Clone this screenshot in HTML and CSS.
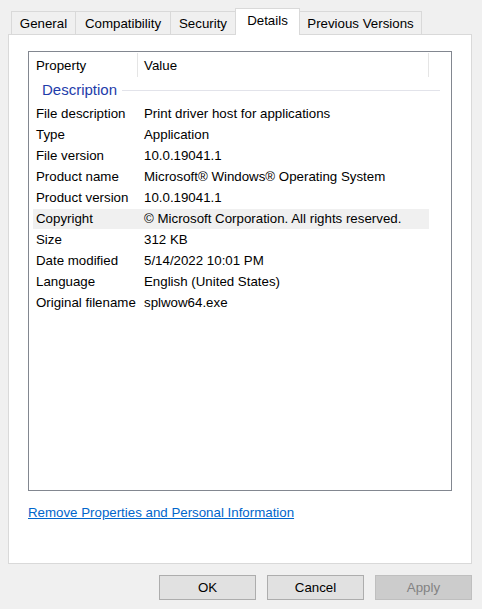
FILE: index.html
```html
<!DOCTYPE html>
<html>
<head>
<meta charset="utf-8">
<link rel="stylesheet" href="styles.css">
</head>
<body>
<div class="dialog">
  <div class="tabs">
    <div class="tab t-general">General</div>
    <div class="tab t-compat">Compatibility</div>
    <div class="tab t-security">Security</div>
    <div class="tab t-details selected">Details</div>
    <div class="tab t-prev">Previous Versions</div>
  </div>
  <div class="panel">
    <div class="listview">
      <div class="lv-header">
        <div class="hcol hprop">Property</div>
        <div class="hcol hval">Value</div>
        <div class="hcol hrest"></div>
      </div>
      <div class="group">
        <span class="group-title">Description</span>
        <span class="group-line"></span>
      </div>
      <div class="rows">
        <div class="row"><span class="k">File description</span><span class="v">Print driver host for applications</span></div>
        <div class="row"><span class="k">Type</span><span class="v">Application</span></div>
        <div class="row"><span class="k">File version</span><span class="v">10.0.19041.1</span></div>
        <div class="row"><span class="k">Product name</span><span class="v">Microsoft® Windows® Operating System</span></div>
        <div class="row"><span class="k">Product version</span><span class="v">10.0.19041.1</span></div>
        <div class="row hot"><span class="k">Copyright</span><span class="v">© Microsoft Corporation. All rights reserved.</span></div>
        <div class="row"><span class="k">Size</span><span class="v">312 KB</span></div>
        <div class="row"><span class="k">Date modified</span><span class="v">5/14/2022 10:01 PM</span></div>
        <div class="row"><span class="k">Language</span><span class="v">English (United States)</span></div>
        <div class="row"><span class="k">Original filename</span><span class="v">splwow64.exe</span></div>
      </div>
    </div>
    <a class="link" href="#">Remove Properties and Personal Information</a>
  </div>
  <div class="buttons">
    <button class="btn">OK</button>
    <button class="btn">Cancel</button>
    <button class="btn disabled">Apply</button>
  </div>
</div>
</body>
</html>
```
FILE: styles.css
```css
html, body {
  margin: 0;
  padding: 0;
  background: #f0f0f0;
}
body {
  font-family: "Liberation Sans", Arial, sans-serif;
  font-size: 13.3px;
  color: #000;
}
.dialog {
  width: 482px;
  height: 609px;
  padding: 8px 10px 0 8px;
  box-sizing: border-box;
  display: flex;
  flex-direction: column;
}
.tabs {
  display: flex;
  align-items: flex-end;
  height: 26px;
  padding-left: 3px;
}
.tab {
  box-sizing: border-box;
  height: 23px;
  border: 1px solid #d9d9d9;
  border-bottom: none;
  border-left: none;
  background: #f0f0f0;
  display: flex;
  align-items: center;
  justify-content: center;
  padding-top: 1px;
  white-space: nowrap;
}
.t-general { width: 65px; border-left: 1px solid #d9d9d9; }
.t-compat { width: 95px; }
.t-security { width: 65px; }
.t-details { width: 65px; }
.t-prev { width: 122px; }
.tab.selected {
  height: 27px;
  margin-bottom: -1px;
  margin-left: -1px;
  border-left: 1px solid #d9d9d9;
  background: #fff;
  position: relative;
  z-index: 1;
  padding-top: 0;
  padding-bottom: 4px;
}
.panel {
  background: #fff;
  border: 1px solid #d9d9d9;
  height: 530px;
  box-sizing: border-box;
  padding: 16px 19px 0 19px;
  display: flex;
  flex-direction: column;
}
.listview {
  border: 1px solid #828790;
  height: 440px;
  box-sizing: border-box;
  padding: 1px 22px 0 4px;
}
.lv-header {
  display: flex;
  height: 25px;
  align-items: stretch;
}
.hcol {
  display: flex;
  align-items: center;
  box-sizing: border-box;
}
.hprop {
  width: 105px;
  padding-left: 3px;
  border-right: 1px solid #e5e5e5;
  margin: 0 0 1px 0;
  padding-top: 1px;
}
.hval {
  width: 291px;
  padding-left: 6px;
  border-right: 1px solid #e5e5e5;
  margin: 0 0 1px 0;
  padding-top: 1px;
}
.group {
  display: flex;
  align-items: center;
  height: 26px;
  padding-left: 9px;
  margin-right: -11px;
}
.group-title {
  color: #1e3caa;
  font-size: 15px;
  padding-bottom: 3px;
}
.group-line {
  flex: 1;
  height: 1px;
  background: #e2e3ea;
  margin-left: 5px;
  margin-bottom: 1px;
}
.rows {
  display: flex;
  flex-direction: column;
}
.row {
  display: flex;
  align-items: center;
  height: 21px;
  width: 396px;
  padding-left: 3px;
  padding-bottom: 2px;
  box-sizing: border-box;
}
.row.hot {
  background: #f0f0f0;
  height: 20px;
  margin-bottom: 1px;
  padding-bottom: 1px;
}
.k {
  width: 108px;
  white-space: nowrap;
}
.v {
  white-space: nowrap;
}
.link {
  margin-top: 14px;
  color: #0066cc;
  text-decoration: underline;
  line-height: 16px;
  align-self: flex-start;
}
.buttons {
  display: flex;
  justify-content: flex-end;
  gap: 11px;
  margin-top: 11px;
}
.btn {
  width: 97px;
  height: 25px;
  background: #e1e1e1;
  border: 1px solid #adadad;
  font-family: "Liberation Sans", Arial, sans-serif;
  font-size: 13.3px;
  color: #000;
  padding: 0;
  margin: 0;
}
.btn.disabled {
  background: #cccccc;
  border-color: #bfbfbf;
  color: #838383;
}
```
